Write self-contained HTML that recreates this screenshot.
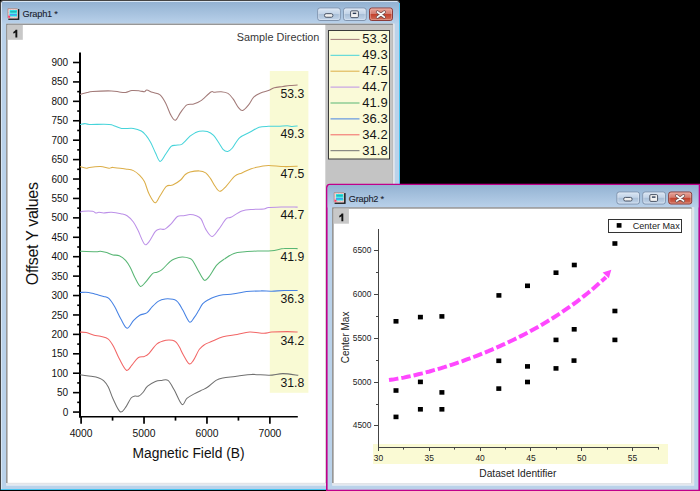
<!DOCTYPE html>
<html><head><meta charset="utf-8"><style>
html,body{margin:0;padding:0;background:#000;width:700px;height:491px;overflow:hidden}
svg{display:block;font-family:"Liberation Sans",sans-serif}
</style></head><body>
<svg width="700" height="491" viewBox="0 0 700 491">
<defs>
<linearGradient id="tg" x1="0" y1="0" x2="0" y2="1"><stop offset="0" stop-color="#93b2d2"/><stop offset="1" stop-color="#b9d1ea"/></linearGradient>
<linearGradient id="bg" x1="0" y1="0" x2="0" y2="1"><stop offset="0" stop-color="#dbe6f3"/><stop offset="0.45" stop-color="#c3d4e8"/><stop offset="0.5" stop-color="#a9bfd8"/><stop offset="1" stop-color="#c4d6ea"/></linearGradient>
<linearGradient id="rg" x1="0" y1="0" x2="0" y2="1"><stop offset="0" stop-color="#e8a49a"/><stop offset="0.45" stop-color="#d47c6e"/><stop offset="0.5" stop-color="#c3402c"/><stop offset="1" stop-color="#d0705a"/></linearGradient>
</defs>
<rect x="0" y="0" width="400" height="491" fill="#000"/>
<path d="M0,490 V3 Q0,0 3,0 H397 Q400,0 400,3 V490 Z" fill="#444"/>
<path d="M1,490 V3.5 Q1,1 3.5,1 H396.5 Q399,1 399,3.5 V490 Z" fill="#d8e6f4"/>
<rect x="2" y="2" width="397" height="488" fill="#bad2ea"/>
<rect x="399" y="3" width="1" height="487" fill="#48c4f0"/>
<rect x="1" y="489" width="399" height="1" fill="#48c4f0"/>
<rect x="2" y="2" width="397" height="21.7" fill="url(#tg)"/>
<rect x="6.2" y="23.7" width="388.3" height="462" fill="#e8eef6"/>
<rect x="6.2" y="23.7" width="388.3" height="460.8" fill="#e2e4e8"/>
<rect x="6.2" y="23.7" width="386.6" height="459.2" fill="#7a7a7a"/>
<rect x="6.2" y="24.6" width="386.6" height="458.3" fill="#9a9a9a"/>
<rect x="7.7" y="24.9" width="385.1" height="458" fill="#c4c4c4"/>
<rect x="7.7" y="24.9" width="317.6" height="458" fill="#fff"/>
<rect x="317.7" y="8.0" width="22.6" height="12.5" rx="2.2" fill="url(#bg)" stroke="#8094ae" stroke-width="1"/><rect x="318.7" y="9.0" width="20.6" height="10.5" rx="1.5" fill="none" stroke="#e6eef8" stroke-opacity="0.6" stroke-width="0.8"/><rect x="343.59999999999997" y="8.0" width="22.6" height="12.5" rx="2.2" fill="url(#bg)" stroke="#8094ae" stroke-width="1"/><rect x="344.59999999999997" y="9.0" width="20.6" height="10.5" rx="1.5" fill="none" stroke="#e6eef8" stroke-opacity="0.6" stroke-width="0.8"/><rect x="369.5" y="8.0" width="23" height="12.5" rx="2.2" fill="url(#rg)" stroke="#8a3c3a" stroke-width="1"/><rect x="370.5" y="9.0" width="21" height="10.5" rx="1.5" fill="none" stroke="#f6c8c0" stroke-opacity="0.5" stroke-width="0.8"/><rect x="324.5" y="13.65" width="8.4" height="3.6" rx="1.6" fill="#f0f0f0" stroke="#4a5466" stroke-width="1"/><rect x="350.59999999999997" y="10.85" width="7.8" height="6.8" rx="1.2" fill="#f2f2f2" stroke="#4a5466" stroke-width="1"/><rect x="352.7" y="12.65" width="3.6" height="1.4" fill="#2a3a55"/><path d="M377.5,11.950000000000001 L384.29999999999995,17.150000000000002 M384.29999999999995,11.950000000000001 L377.5,17.150000000000002" stroke="#6a4a4a" stroke-width="3.2" stroke-linecap="round"/><path d="M377.5,11.950000000000001 L384.29999999999995,17.150000000000002 M384.29999999999995,11.950000000000001 L377.5,17.150000000000002" stroke="#fafafa" stroke-width="1.8" stroke-linecap="round"/>
<rect x="8.3" y="9.100000000000001" width="11" height="10.8" fill="#1a1a1a"/><rect x="7.5" y="8.3" width="10.3" height="10.2" fill="#f6e2e2"/><path d="M7.8,18.3 V8.600000000000001 H17.7" fill="none" stroke="#707070" stroke-width="0.6"/><rect x="8.4" y="9.200000000000001" width="8.6" height="8.5" fill="none" stroke="#e89a9a" stroke-width="0.7" stroke-dasharray="1,0.6"/><rect x="9.6" y="10.100000000000001" width="7.4" height="6.4" fill="#18e2e4"/><rect x="9.6" y="12.700000000000001" width="7.4" height="0.9" fill="#7ef0f0"/><rect x="10.3" y="11.5" width="6" height="0.8" fill="#2a8c8c"/><rect x="9.6" y="14.3" width="7" height="0.9" fill="#6a78f2"/><rect x="8.2" y="15.700000000000001" width="2" height="2" fill="#ff3a6a"/>
<text x="22.5" y="17.4" font-size="9.2" letter-spacing="-0.2" fill="#18202c" stroke="#18202c" stroke-width="0.1">Graph1 *</text>
<rect x="7.7" y="24.9" width="15.1" height="14.9" fill="#c8c8c8"/>
<path transform="translate(0,0)" d="M13.3,31.9 C14.3,31.4 15.2,30.7 15.6,29.7 H17.3 V37.4 H15.4 V32.4 C14.8,32.9 14.1,33.3 13.3,33.6 Z" fill="#111"/>
<text x="236.8" y="41.3" font-size="10.85" fill="#383838">Sample Direction</text>
<rect x="269.8" y="71" width="38.6" height="321.8" fill="#f9fad4"/>
<g stroke="#000" stroke-width="1.6" fill="none">
<path d="M80,52.5 V417.6" stroke-width="2"/>
<path d="M79,416.8 H297.8" stroke-width="1.6"/>
<path d="M73,62.50 H80"/>
<path d="M73,81.92 H80"/>
<path d="M73,101.34 H80"/>
<path d="M73,120.76 H80"/>
<path d="M73,140.18 H80"/>
<path d="M73,159.60 H80"/>
<path d="M73,179.02 H80"/>
<path d="M73,198.44 H80"/>
<path d="M73,217.86 H80"/>
<path d="M73,237.28 H80"/>
<path d="M73,256.70 H80"/>
<path d="M73,276.12 H80"/>
<path d="M73,295.54 H80"/>
<path d="M73,314.96 H80"/>
<path d="M73,334.38 H80"/>
<path d="M73,353.80 H80"/>
<path d="M73,373.22 H80"/>
<path d="M73,392.64 H80"/>
<path d="M73,412.06 H80"/>
<path d="M77.2,72.21 H80"/>
<path d="M77.2,91.63 H80"/>
<path d="M77.2,111.05 H80"/>
<path d="M77.2,130.47 H80"/>
<path d="M77.2,149.89 H80"/>
<path d="M77.2,169.31 H80"/>
<path d="M77.2,188.73 H80"/>
<path d="M77.2,208.15 H80"/>
<path d="M77.2,227.57 H80"/>
<path d="M77.2,246.99 H80"/>
<path d="M77.2,266.41 H80"/>
<path d="M77.2,285.83 H80"/>
<path d="M77.2,305.25 H80"/>
<path d="M77.2,324.67 H80"/>
<path d="M77.2,344.09 H80"/>
<path d="M77.2,363.51 H80"/>
<path d="M77.2,382.93 H80"/>
<path d="M77.2,402.35 H80"/>
<path d="M81.10,416.5 V423.7" stroke-width="1.7"/>
<path d="M144.03,416.5 V423.7" stroke-width="1.7"/>
<path d="M206.96,416.5 V423.7" stroke-width="1.7"/>
<path d="M269.89,416.5 V423.7" stroke-width="1.7"/>
<path d="M112.56,416.5 V420.6" stroke-width="1.7"/>
<path d="M175.50,416.5 V420.6" stroke-width="1.7"/>
<path d="M238.43,416.5 V420.6" stroke-width="1.7"/>
</g>
<text x="68.2" y="66.0" font-size="10" text-anchor="end" fill="#111">900</text>
<text x="68.2" y="85.4" font-size="10" text-anchor="end" fill="#111">850</text>
<text x="68.2" y="104.8" font-size="10" text-anchor="end" fill="#111">800</text>
<text x="68.2" y="124.3" font-size="10" text-anchor="end" fill="#111">750</text>
<text x="68.2" y="143.7" font-size="10" text-anchor="end" fill="#111">700</text>
<text x="68.2" y="163.1" font-size="10" text-anchor="end" fill="#111">650</text>
<text x="68.2" y="182.5" font-size="10" text-anchor="end" fill="#111">600</text>
<text x="68.2" y="201.9" font-size="10" text-anchor="end" fill="#111">550</text>
<text x="68.2" y="221.4" font-size="10" text-anchor="end" fill="#111">500</text>
<text x="68.2" y="240.8" font-size="10" text-anchor="end" fill="#111">450</text>
<text x="68.2" y="260.2" font-size="10" text-anchor="end" fill="#111">400</text>
<text x="68.2" y="279.6" font-size="10" text-anchor="end" fill="#111">350</text>
<text x="68.2" y="299.0" font-size="10" text-anchor="end" fill="#111">300</text>
<text x="68.2" y="318.5" font-size="10" text-anchor="end" fill="#111">250</text>
<text x="68.2" y="337.9" font-size="10" text-anchor="end" fill="#111">200</text>
<text x="68.2" y="357.3" font-size="10" text-anchor="end" fill="#111">150</text>
<text x="68.2" y="376.7" font-size="10" text-anchor="end" fill="#111">100</text>
<text x="68.2" y="396.1" font-size="10" text-anchor="end" fill="#111">50</text>
<text x="68.2" y="415.6" font-size="10" text-anchor="end" fill="#111">0</text>
<text x="81.1" y="436.9" font-size="10.3" text-anchor="middle" fill="#111">4000</text>
<text x="144.0" y="436.9" font-size="10.3" text-anchor="middle" fill="#111">5000</text>
<text x="207.0" y="436.9" font-size="10.3" text-anchor="middle" fill="#111">6000</text>
<text x="269.9" y="436.9" font-size="10.3" text-anchor="middle" fill="#111">7000</text>
<text x="132.6" y="457.8" font-size="13.8" fill="#111">Magnetic Field (B)</text>
<text transform="translate(37.8,285.3) rotate(-90)" font-size="16.2" letter-spacing="-0.4" fill="#111">Offset Y values</text>
<g fill="none" stroke-width="1.05" stroke-linejoin="round">
<path d="M80.0,94.4 C81.2,94.1 85.0,93.0 87.1,92.5 C89.2,92.0 88.5,91.8 92.6,91.5 C96.6,91.2 107.0,90.8 111.4,90.9 C115.9,91.0 116.9,91.7 119.3,92.0 C121.7,92.3 123.5,92.7 125.6,92.5 C127.7,92.3 129.6,90.9 131.9,90.6 C134.2,90.3 137.6,90.7 139.7,90.9 C141.8,91.1 143.2,91.8 144.4,91.7 C145.6,91.6 145.5,90.0 146.8,90.1 C148.1,90.2 150.1,91.5 152.3,92.3 C154.5,93.1 157.9,93.0 160.1,94.8 C162.3,96.6 163.8,99.5 165.6,103.0 C167.4,106.5 169.4,112.7 171.1,115.6 C172.8,118.5 173.9,120.8 175.5,120.3 C177.1,119.8 178.7,115.0 180.6,112.4 C182.5,109.8 184.7,106.3 186.9,104.9 C189.1,103.5 191.4,104.7 193.7,104.0 C196.0,103.3 197.7,102.9 200.6,100.9 C203.5,98.9 208.6,93.4 210.9,92.0 C213.2,90.6 212.6,92.3 214.3,92.3 C216.0,92.2 218.8,91.5 221.1,91.7 C223.4,91.9 226.0,92.2 228.0,93.4 C230.0,94.6 231.4,96.6 233.1,98.9 C234.8,101.2 236.7,105.5 238.3,107.4 C239.9,109.3 240.9,110.9 242.6,110.5 C244.3,110.1 246.8,107.1 248.6,104.9 C250.4,102.7 251.7,99.1 253.7,97.1 C255.7,95.1 258.0,94.0 260.6,92.9 C263.2,91.8 266.8,91.2 269.1,90.3 C271.4,89.4 272.0,88.3 274.3,87.7 C276.6,87.1 280.3,86.9 282.9,86.5 C285.5,86.1 287.2,85.7 289.7,85.5 C292.1,85.3 296.3,85.2 297.6,85.1" stroke="#a27a78"/>
<path d="M80.0,124.4 C80.8,124.3 83.1,123.6 84.7,123.6 C86.3,123.6 85.3,124.3 89.4,124.4 C93.5,124.5 104.9,124.1 109.1,124.4 C113.3,124.7 112.5,125.3 114.6,126.0 C116.7,126.7 118.5,128.0 121.6,128.4 C124.7,128.8 130.1,128.0 133.4,128.4 C136.7,128.8 139.2,129.8 141.3,131.0 C143.4,132.2 144.4,133.5 146.0,135.4 C147.6,137.3 149.1,139.6 150.7,142.5 C152.3,145.4 153.8,149.5 155.4,152.7 C157.0,155.8 158.4,161.1 160.1,161.4 C161.8,161.7 163.8,156.8 165.6,154.3 C167.4,151.8 169.4,147.9 171.1,146.4 C172.8,144.9 174.1,145.6 175.9,145.2 C177.7,144.8 179.8,145.6 182.1,144.1 C184.4,142.6 187.9,138.0 190.0,136.2 C192.1,134.4 193.1,133.9 194.7,133.1 C196.3,132.3 197.3,131.5 199.4,131.2 C201.5,130.9 204.9,130.8 207.3,131.5 C209.7,132.2 211.6,133.4 213.6,135.4 C215.6,137.4 217.5,141.0 219.1,143.3 C220.7,145.6 221.6,147.9 223.0,149.3 C224.4,150.7 226.1,151.7 227.7,151.5 C229.3,151.3 230.4,150.3 232.4,148.0 C234.4,145.7 236.6,140.4 239.5,137.8 C242.4,135.2 246.4,134.1 249.7,132.3 C253.0,130.6 256.0,128.3 259.1,127.3 C262.2,126.3 265.5,126.5 268.6,126.3 C271.8,126.1 274.9,126.4 278.0,126.3 C281.1,126.2 285.0,125.7 287.4,125.7 C289.8,125.7 290.4,126.5 292.1,126.5 C293.8,126.5 296.7,126.1 297.6,126.0" stroke="#46d4da"/>
<path d="M80.0,166.6 C81.0,166.9 84.7,168.1 86.3,168.2 C87.9,168.3 87.1,167.7 89.4,167.4 C91.8,167.1 97.1,166.5 100.4,166.6 C103.7,166.7 107.0,168.1 109.1,168.2 C111.2,168.3 110.2,167.3 113.0,167.4 C115.8,167.5 122.2,168.5 125.6,169.0 C129.0,169.5 131.1,169.5 133.4,170.6 C135.8,171.7 137.9,173.5 139.7,175.3 C141.5,177.1 142.8,178.5 144.4,181.6 C146.0,184.7 147.3,190.6 149.1,194.1 C150.9,197.6 153.3,202.5 155.1,202.8 C156.9,203.1 158.2,198.4 160.1,195.7 C162.0,192.9 164.3,188.1 166.4,186.3 C168.5,184.5 170.3,186.1 172.7,185.0 C175.1,183.9 178.5,181.8 180.6,180.0 C182.7,178.2 183.7,175.8 185.3,174.5 C186.9,173.2 187.7,172.7 190.0,172.1 C192.3,171.5 196.8,170.8 199.4,170.9 C202.0,171.0 203.9,171.7 205.7,172.9 C207.5,174.2 208.8,176.2 210.4,178.4 C212.0,180.6 213.5,184.2 215.1,186.3 C216.7,188.5 218.1,191.3 219.9,191.3 C221.7,191.3 223.6,188.8 226.1,186.3 C228.6,183.8 232.2,178.3 234.8,176.1 C237.4,173.9 239.2,174.1 241.9,172.9 C244.7,171.7 248.2,169.8 251.3,168.7 C254.4,167.6 257.8,167.1 260.7,166.6 C263.6,166.1 264.7,165.4 268.6,165.4 C272.5,165.4 279.5,166.5 284.3,166.6 C289.1,166.7 295.4,166.3 297.6,166.2" stroke="#dcae48"/>
<path d="M80.0,212.3 C80.5,212.1 81.0,211.5 83.1,211.3 C85.2,211.1 90.5,211.0 92.6,211.3 C94.7,211.6 94.7,212.7 95.7,212.9 C96.8,213.1 97.6,212.3 98.9,212.3 C100.2,212.3 101.5,212.9 103.6,212.9 C105.7,212.9 108.5,212.2 111.4,212.3 C114.3,212.4 118.3,213.1 120.9,213.7 C123.5,214.3 125.0,214.3 127.1,215.7 C129.2,217.1 131.6,219.5 133.4,222.0 C135.2,224.5 136.3,226.9 138.1,230.6 C139.9,234.3 142.6,242.2 144.4,244.0 C146.2,245.8 147.3,243.7 149.1,241.6 C150.9,239.5 153.6,233.5 155.4,231.4 C157.2,229.3 158.5,229.5 160.1,229.1 C161.7,228.7 163.1,230.0 164.9,229.1 C166.7,228.2 169.0,226.0 171.1,223.9 C173.2,221.8 175.3,217.9 177.4,216.5 C179.5,215.1 181.6,216.0 183.7,215.7 C185.8,215.4 187.9,214.5 190.0,214.5 C192.1,214.5 194.5,215.0 196.3,215.7 C198.1,216.4 199.4,216.7 201.0,218.9 C202.6,221.1 203.9,226.2 205.7,229.1 C207.5,232.0 209.9,236.4 212.0,236.5 C214.1,236.6 216.0,232.8 218.3,229.9 C220.7,227.0 224.0,221.0 226.1,218.9 C228.2,216.8 228.3,218.6 230.9,217.3 C233.5,216.0 238.2,212.3 241.9,211.0 C245.6,209.7 249.2,209.7 252.9,209.4 C256.6,209.1 261.3,209.3 263.9,209.0 C266.5,208.7 265.7,207.7 268.6,207.4 C271.5,207.1 276.3,207.2 281.1,207.1 C285.9,207.0 294.9,207.1 297.6,207.1" stroke="#bc90e8"/>
<path d="M80.0,251.3 C82.6,251.4 92.3,251.8 95.7,251.8 C99.1,251.8 98.6,251.2 100.4,251.3 C102.2,251.4 104.6,252.0 106.7,252.6 C108.8,253.2 110.9,254.4 113.0,254.9 C115.1,255.4 117.2,254.8 119.3,255.7 C121.4,256.6 123.8,258.4 125.6,260.4 C127.4,262.4 128.7,264.6 130.3,267.5 C131.9,270.4 133.3,274.6 135.0,277.7 C136.7,280.8 138.7,285.8 140.5,286.4 C142.3,287.0 144.0,283.7 146.0,281.6 C148.0,279.5 150.5,275.4 152.3,273.8 C154.1,272.2 155.4,272.9 157.0,272.2 C158.6,271.5 159.6,271.6 161.7,269.9 C163.8,268.2 167.5,263.8 169.6,262.0 C171.7,260.2 172.2,259.7 174.3,258.9 C176.4,258.1 179.5,257.1 182.1,257.0 C184.7,256.9 188.2,257.8 190.0,258.5 C191.8,259.2 191.8,259.3 193.1,261.2 C194.4,263.1 196.1,266.8 197.9,269.9 C199.7,273.0 202.3,278.9 204.1,280.1 C205.9,281.3 206.8,279.4 208.9,276.9 C211.0,274.4 214.1,268.1 216.7,265.1 C219.3,262.1 221.7,260.8 224.6,258.9 C227.5,256.9 230.6,254.6 234.0,253.4 C237.4,252.2 241.1,252.2 245.0,251.8 C248.9,251.4 253.2,251.2 257.6,251.0 C262.1,250.8 267.2,251.1 271.7,250.7 C276.1,250.3 280.0,248.9 284.3,248.6 C288.6,248.2 295.4,248.6 297.6,248.6" stroke="#58b674"/>
<path d="M80.0,292.4 C81.4,292.4 86.0,292.1 88.6,292.4 C91.2,292.7 93.2,293.6 95.7,294.3 C98.2,295.0 101.4,295.7 103.6,296.4 C105.8,297.1 107.3,297.0 109.1,298.7 C110.9,300.4 112.6,303.2 114.6,306.6 C116.6,310.0 118.8,315.5 120.9,319.1 C123.0,322.7 125.0,328.0 127.1,328.3 C129.2,328.6 131.3,322.9 133.4,320.7 C135.5,318.5 137.5,316.5 139.7,315.2 C141.9,313.9 144.7,314.3 146.8,312.9 C148.9,311.5 150.3,308.6 152.3,306.6 C154.3,304.6 156.5,302.4 158.6,301.1 C160.7,299.8 162.7,299.3 165.1,299.0 C167.5,298.7 171.0,299.0 172.9,299.3 C174.8,299.6 175.2,299.8 176.3,300.7 C177.4,301.6 178.6,303.0 179.7,304.6 C180.8,306.2 181.4,307.7 183.1,310.6 C184.8,313.5 187.7,321.0 189.6,322.1 C191.5,323.2 192.8,319.3 194.3,317.4 C195.8,315.5 197.2,312.9 198.6,310.6 C200.0,308.3 201.1,305.6 202.8,303.7 C204.5,301.8 206.9,300.6 208.9,299.5 C210.9,298.4 212.8,297.6 215.1,296.8 C217.4,296.0 220.4,295.2 223.0,294.8 C225.6,294.4 228.6,294.6 230.9,294.3 C233.2,294.0 234.5,293.6 237.1,293.2 C239.7,292.8 242.7,292.0 246.6,291.6 C250.5,291.2 256.5,291.0 260.7,290.9 C264.9,290.8 267.8,291.3 271.7,291.2 C275.6,291.1 280.0,290.6 284.3,290.5 C288.6,290.4 295.4,290.5 297.6,290.5" stroke="#4682e4"/>
<path d="M80.0,332.1 C81.0,332.2 84.0,332.0 86.3,332.5 C88.6,333.0 91.8,334.6 94.1,335.2 C96.4,335.8 98.0,335.6 100.4,336.3 C102.8,337.0 106.1,337.3 108.3,339.1 C110.5,340.9 112.0,343.7 113.8,347.0 C115.6,350.3 117.2,354.9 119.3,358.8 C121.4,362.7 124.3,369.2 126.4,370.3 C128.5,371.4 130.0,367.2 131.9,365.1 C133.8,363.0 136.0,359.1 138.1,357.7 C140.2,356.2 142.6,357.1 144.4,356.4 C146.2,355.7 147.0,355.4 149.1,353.3 C151.2,351.2 154.2,346.1 157.0,343.9 C159.8,341.7 163.4,340.9 166.0,340.3 C168.6,339.7 170.7,340.0 172.4,340.3 C174.1,340.6 175.1,341.2 176.3,342.4 C177.5,343.6 178.6,345.6 179.7,347.6 C180.8,349.6 181.5,351.7 183.1,354.4 C184.7,357.1 187.4,362.8 189.1,363.8 C190.8,364.8 191.7,362.8 193.4,360.4 C195.1,358.0 197.5,351.9 199.4,349.3 C201.3,346.7 202.6,345.9 204.6,344.6 C206.6,343.3 208.3,342.9 211.4,341.6 C214.5,340.3 218.7,338.0 223.0,336.8 C227.3,335.6 232.7,335.2 237.1,334.4 C241.5,333.6 245.2,332.3 249.7,332.1 C254.2,331.9 260.2,333.2 263.9,333.2 C267.6,333.2 267.8,332.4 271.7,332.1 C275.6,331.8 283.1,331.6 287.4,331.6 C291.7,331.6 295.9,332.0 297.6,332.1" stroke="#f26666"/>
<path d="M80.0,374.7 C81.8,375.0 87.8,375.8 91.0,376.3 C94.2,376.8 96.8,377.2 98.9,377.9 C101.0,378.6 102.0,379.2 103.6,380.7 C105.2,382.2 106.7,384.0 108.3,387.0 C109.9,390.0 111.0,394.7 113.0,398.8 C115.0,402.9 118.0,410.4 120.1,411.8 C122.2,413.2 123.8,409.7 125.6,407.4 C127.4,405.1 129.5,399.9 131.1,398.0 C132.7,396.1 133.7,396.4 135.0,396.1 C136.3,395.8 137.6,396.7 138.9,396.1 C140.2,395.5 141.5,394.1 142.9,392.5 C144.3,390.9 145.5,388.0 147.6,386.2 C149.7,384.4 153.1,382.5 155.4,381.5 C157.8,380.5 159.6,380.6 161.7,380.4 C163.8,380.2 165.9,378.8 168.0,380.4 C170.1,382.0 172.0,386.1 174.3,390.1 C176.6,394.1 179.8,403.0 181.9,404.4 C184.0,405.8 184.9,400.1 186.9,398.4 C188.9,396.7 191.1,395.5 193.7,394.1 C196.3,392.7 200.0,391.0 202.3,389.9 C204.6,388.8 205.1,388.9 207.4,387.3 C209.7,385.7 213.4,382.0 216.0,380.4 C218.6,378.8 220.1,378.5 222.9,377.9 C225.8,377.3 230.5,377.0 233.1,376.7 C235.7,376.4 235.2,376.5 238.3,376.1 C241.5,375.7 246.9,374.5 252.0,374.4 C257.1,374.3 264.0,375.4 269.1,375.3 C274.2,375.2 278.0,373.6 282.9,373.6 C287.8,373.6 295.7,375.0 298.3,375.3" stroke="#707070"/>
</g>
<text transform="translate(304.2,98.4) scale(0.92,1)" font-size="13.3" text-anchor="end" fill="#151515">53.3</text>
<text transform="translate(304.2,138.4) scale(0.92,1)" font-size="13.3" text-anchor="end" fill="#151515">49.3</text>
<text transform="translate(304.2,178.4) scale(0.92,1)" font-size="13.3" text-anchor="end" fill="#151515">47.5</text>
<text transform="translate(304.2,219.3) scale(0.92,1)" font-size="13.3" text-anchor="end" fill="#151515">44.7</text>
<text transform="translate(304.2,260.5) scale(0.92,1)" font-size="13.3" text-anchor="end" fill="#151515">41.9</text>
<text transform="translate(304.2,303.3) scale(0.92,1)" font-size="13.3" text-anchor="end" fill="#151515">36.3</text>
<text transform="translate(304.2,345.3) scale(0.92,1)" font-size="13.3" text-anchor="end" fill="#151515">34.2</text>
<text transform="translate(304.2,387.3) scale(0.92,1)" font-size="13.3" text-anchor="end" fill="#151515">31.8</text>
<rect x="328.5" y="30.5" width="61" height="128.5" fill="#fafad8" stroke="#3a3a3a" stroke-width="1"/>
<path d="M330.5,39.4 H359.5" stroke="#a27a78" stroke-width="1"/>
<text transform="translate(387.6,43.3) scale(0.955,1)" font-size="13.6" text-anchor="end" fill="#151515">53.3</text>
<path d="M330.5,55.3 H359.5" stroke="#46d4da" stroke-width="1"/>
<text transform="translate(387.6,59.2) scale(0.955,1)" font-size="13.6" text-anchor="end" fill="#151515">49.3</text>
<path d="M330.5,71.2 H359.5" stroke="#dcae48" stroke-width="1"/>
<text transform="translate(387.6,75.1) scale(0.955,1)" font-size="13.6" text-anchor="end" fill="#151515">47.5</text>
<path d="M330.5,87.1 H359.5" stroke="#bc90e8" stroke-width="1"/>
<text transform="translate(387.6,91.0) scale(0.955,1)" font-size="13.6" text-anchor="end" fill="#151515">44.7</text>
<path d="M330.5,103.0 H359.5" stroke="#58b674" stroke-width="1"/>
<text transform="translate(387.6,106.9) scale(0.955,1)" font-size="13.6" text-anchor="end" fill="#151515">41.9</text>
<path d="M330.5,118.9 H359.5" stroke="#4682e4" stroke-width="1"/>
<text transform="translate(387.6,122.8) scale(0.955,1)" font-size="13.6" text-anchor="end" fill="#151515">36.3</text>
<path d="M330.5,134.8 H359.5" stroke="#f26666" stroke-width="1"/>
<text transform="translate(387.6,138.7) scale(0.955,1)" font-size="13.6" text-anchor="end" fill="#151515">34.2</text>
<path d="M330.5,150.7 H359.5" stroke="#707070" stroke-width="1"/>
<text transform="translate(387.6,154.6) scale(0.955,1)" font-size="13.6" text-anchor="end" fill="#151515">31.8</text>
<path d="M326,491 V187.7 Q326,183.7 330,183.7 H700 V491 Z" fill="#c0008a"/>
<path d="M327.6,489.7 V188 Q327.6,185 330.6,185 H698.4 V489.7 Z" fill="#bad2ea"/>
<path d="M327.6,207.4 V188 Q327.6,185 330.6,185 H698.4 V207.4 Z" fill="url(#tg)"/>
<rect x="332.2" y="207.4" width="362" height="278.3" fill="#e8eef6"/>
<rect x="332.2" y="207.4" width="361.6" height="277.2" fill="#e2e4e8"/>
<rect x="332.2" y="207.4" width="359.4" height="275.6" fill="#7a7a7a"/>
<rect x="332.2" y="208.2" width="359.4" height="274.8" fill="#9a9a9a"/>
<rect x="333.7" y="208.7" width="357.9" height="274.3" fill="#fff"/>
<rect x="616.9" y="192.0" width="22.6" height="12" rx="2.2" fill="url(#bg)" stroke="#8094ae" stroke-width="1"/><rect x="617.9" y="193.0" width="20.6" height="10" rx="1.5" fill="none" stroke="#e6eef8" stroke-opacity="0.6" stroke-width="0.8"/><rect x="642.8" y="192.0" width="22.6" height="12" rx="2.2" fill="url(#bg)" stroke="#8094ae" stroke-width="1"/><rect x="643.8" y="193.0" width="20.6" height="10" rx="1.5" fill="none" stroke="#e6eef8" stroke-opacity="0.6" stroke-width="0.8"/><rect x="668.6999999999999" y="192.0" width="23" height="12" rx="2.2" fill="url(#rg)" stroke="#8a3c3a" stroke-width="1"/><rect x="669.6999999999999" y="193.0" width="21" height="10" rx="1.5" fill="none" stroke="#f6c8c0" stroke-opacity="0.5" stroke-width="0.8"/><rect x="623.6999999999999" y="197.4" width="8.4" height="3.6" rx="1.6" fill="#f0f0f0" stroke="#4a5466" stroke-width="1"/><rect x="649.8" y="194.6" width="7.8" height="6.8" rx="1.2" fill="#f2f2f2" stroke="#4a5466" stroke-width="1"/><rect x="651.9" y="196.4" width="3.6" height="1.4" fill="#2a3a55"/><path d="M676.6999999999999,195.70000000000002 L683.4999999999999,200.9 M683.4999999999999,195.70000000000002 L676.6999999999999,200.9" stroke="#6a4a4a" stroke-width="3.2" stroke-linecap="round"/><path d="M676.6999999999999,195.70000000000002 L683.4999999999999,200.9 M683.4999999999999,195.70000000000002 L676.6999999999999,200.9" stroke="#fafafa" stroke-width="1.8" stroke-linecap="round"/>
<rect x="334.6" y="193.10000000000002" width="11" height="10.8" fill="#1a1a1a"/><rect x="333.8" y="192.3" width="10.3" height="10.2" fill="#f6e2e2"/><path d="M334.1,202.3 V192.60000000000002 H344.0" fill="none" stroke="#707070" stroke-width="0.6"/><rect x="334.7" y="193.20000000000002" width="8.6" height="8.5" fill="none" stroke="#e89a9a" stroke-width="0.7" stroke-dasharray="1,0.6"/><rect x="335.90000000000003" y="194.10000000000002" width="7.4" height="6.4" fill="#18e2e4"/><rect x="335.90000000000003" y="196.70000000000002" width="7.4" height="0.9" fill="#7ef0f0"/><rect x="336.6" y="195.5" width="6" height="0.8" fill="#2a8c8c"/><rect x="335.90000000000003" y="198.3" width="7" height="0.9" fill="#6a78f2"/><rect x="334.5" y="199.70000000000002" width="2" height="2" fill="#ff3a6a"/>
<text x="348.8" y="201.8" font-size="9.2" letter-spacing="-0.2" fill="#18202c" stroke="#18202c" stroke-width="0.1">Graph2 *</text>
<rect x="333.7" y="208.7" width="15.2" height="15" fill="#c8c8c8"/>
<path transform="translate(326,183.8)" d="M13.3,31.9 C14.3,31.4 15.2,30.7 15.6,29.7 H17.3 V37.4 H15.4 V32.4 C14.8,32.9 14.1,33.3 13.3,33.6 Z" fill="#111"/>
<rect x="373" y="444" width="295" height="20" fill="#fafad4"/>
<g stroke="#444" stroke-width="1" fill="none">
<path d="M378.5,229 V448 M378,447.5 H659"/>
<path d="M374,250.5 H378.5"/>
<path d="M374,294.5 H378.5"/>
<path d="M374,338.5 H378.5"/>
<path d="M374,382.5 H378.5"/>
<path d="M374,425.5 H378.5"/>
<path d="M376,272.5 H378.5"/>
<path d="M376,316.5 H378.5"/>
<path d="M376,360.5 H378.5"/>
<path d="M376,404.5 H378.5"/>
<path d="M378.5,447.5 V451"/>
<path d="M429.5,447.5 V451"/>
<path d="M480.5,447.5 V451"/>
<path d="M530.5,447.5 V451"/>
<path d="M581.5,447.5 V451"/>
<path d="M632.5,447.5 V451"/>
<path d="M403.5,447.5 V449.6"/>
<path d="M454.5,447.5 V449.6"/>
<path d="M505.5,447.5 V449.6"/>
<path d="M556.5,447.5 V449.6"/>
<path d="M607.5,447.5 V449.6"/>
<path d="M658.5,447.5 V449.6"/>
</g>
<text transform="translate(371.4,252.9) scale(0.92,1)" font-size="9.1" text-anchor="end" fill="#222">6500</text>
<text transform="translate(371.4,296.9) scale(0.92,1)" font-size="9.1" text-anchor="end" fill="#222">6000</text>
<text transform="translate(371.4,340.9) scale(0.92,1)" font-size="9.1" text-anchor="end" fill="#222">5500</text>
<text transform="translate(371.4,384.9) scale(0.92,1)" font-size="9.1" text-anchor="end" fill="#222">5000</text>
<text transform="translate(371.4,427.9) scale(0.92,1)" font-size="9.1" text-anchor="end" fill="#222">4500</text>
<text transform="translate(378.5,460.7) scale(0.92,1)" font-size="9.2" text-anchor="middle" fill="#222">30</text>
<text transform="translate(429.3,460.7) scale(0.92,1)" font-size="9.2" text-anchor="middle" fill="#222">35</text>
<text transform="translate(480.1,460.7) scale(0.92,1)" font-size="9.2" text-anchor="middle" fill="#222">40</text>
<text transform="translate(530.9,460.7) scale(0.92,1)" font-size="9.2" text-anchor="middle" fill="#222">45</text>
<text transform="translate(581.7,460.7) scale(0.92,1)" font-size="9.2" text-anchor="middle" fill="#222">50</text>
<text transform="translate(632.5,460.7) scale(0.92,1)" font-size="9.2" text-anchor="middle" fill="#222">55</text>
<text x="479.3" y="476.9" font-size="10.2" fill="#222">Dataset Identifier</text>
<text transform="translate(349.2,363.3) rotate(-90)" font-size="10" fill="#222">Center Max</text>
<rect x="393.5" y="319.0" width="5" height="4.6" fill="#000"/>
<rect x="393.5" y="388.2" width="5" height="4.6" fill="#000"/>
<rect x="393.5" y="414.6" width="5" height="4.6" fill="#000"/>
<rect x="417.9" y="314.8" width="5" height="4.6" fill="#000"/>
<rect x="417.9" y="379.6" width="5" height="4.6" fill="#000"/>
<rect x="417.9" y="407.0" width="5" height="4.6" fill="#000"/>
<rect x="439.4" y="314.1" width="5" height="4.6" fill="#000"/>
<rect x="439.4" y="390.1" width="5" height="4.6" fill="#000"/>
<rect x="439.4" y="407.0" width="5" height="4.6" fill="#000"/>
<rect x="496.4" y="293.1" width="5" height="4.6" fill="#000"/>
<rect x="496.3" y="358.5" width="5" height="4.6" fill="#000"/>
<rect x="496.3" y="386.3" width="5" height="4.6" fill="#000"/>
<rect x="525.0" y="283.5" width="5" height="4.6" fill="#000"/>
<rect x="525.0" y="364.1" width="5" height="4.6" fill="#000"/>
<rect x="525.0" y="379.7" width="5" height="4.6" fill="#000"/>
<rect x="553.5" y="270.4" width="5" height="4.6" fill="#000"/>
<rect x="553.5" y="337.6" width="5" height="4.6" fill="#000"/>
<rect x="553.5" y="366.1" width="5" height="4.6" fill="#000"/>
<rect x="571.8" y="262.7" width="5" height="4.6" fill="#000"/>
<rect x="571.7" y="327.0" width="5" height="4.6" fill="#000"/>
<rect x="571.5" y="358.3" width="5" height="4.6" fill="#000"/>
<rect x="612.4" y="241.2" width="5" height="4.6" fill="#000"/>
<rect x="612.4" y="308.7" width="5" height="4.6" fill="#000"/>
<rect x="612.4" y="337.6" width="5" height="4.6" fill="#000"/>
<rect x="608.5" y="219.5" width="73" height="13" fill="#fff" stroke="#333" stroke-width="1"/>
<rect x="616.7" y="223.1" width="4.8" height="4.6" fill="#000"/>
<text x="632.7" y="228.9" font-size="9.1" fill="#222">Center Max</text>
<path d="M389.0,380.1 L392.7,379.6 L396.4,378.9 L400.0,378.3 L403.7,377.6 L407.4,376.8 L411.1,376.0 L414.7,375.2 L418.4,374.3 L422.1,373.4 L425.8,372.4 L429.5,371.5 L433.1,370.4 L436.8,369.4 L440.5,368.3 L444.2,367.2 L447.8,366.0 L451.5,364.8 L455.2,363.6 L458.9,362.4 L462.6,361.1 L466.2,359.7 L469.9,358.4 L473.6,357.0 L477.3,355.6 L480.9,354.2 L484.6,352.7 L488.3,351.2 L492.0,349.6 L495.7,348.0 L499.3,346.4 L503.0,344.7 L506.7,343.1 L510.4,341.3 L514.1,339.5 L517.7,337.7 L521.4,335.9 L525.1,334.0 L528.8,332.0 L532.4,330.0 L536.1,328.0 L539.8,325.9 L543.5,323.7 L547.2,321.5 L550.8,319.3 L554.5,317.0 L558.2,314.6 L561.9,312.2 L565.5,309.7 L569.2,307.1 L572.9,304.5 L576.6,301.8 L580.3,299.0 L583.9,296.1 L587.6,293.2 L591.3,290.2 L595.0,287.0 L598.6,283.8 L602.3,280.5 L606.0,277.2" fill="none" stroke="#ff48ff" stroke-width="4" stroke-dasharray="9.5,3"/>
<path d="M611.3,269.8 L602.6,272.6 L608.9,278.2 Z" fill="#ff48ff"/>
</svg>
</body></html>
